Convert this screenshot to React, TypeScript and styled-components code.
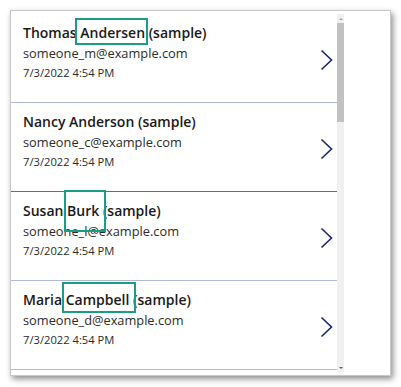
import React from "react";
import styled, { createGlobalStyle } from "styled-components";

const Global = createGlobalStyle`
  html, body { margin: 0; padding: 0; background: #ffffff; }
  body { font-family: "Open Sans", "Noto Sans", sans-serif; }
`;

const Page = styled.div`
  padding: 10px;
  width: 401px;
  height: 387px;
  box-sizing: border-box;
`;

const Frame = styled.div`
  width: 381px;
  height: 366px;
  box-sizing: border-box;
  border: 1px solid #c8c8c8;
  background: #ffffff;
  box-shadow: 2px 3px 6px rgba(0, 0, 0, 0.45);
  padding-top: 3px;
  display: flex;
  align-items: flex-start;
`;

const Gallery = styled.div`
  display: flex;
  width: 333px;
  height: 358px;
`;

const List = styled.div`
  width: 326px;
  height: 358px;
  overflow: hidden;
  display: flex;
  flex-direction: column;
`;

const Row = styled.div<{ $sep: string }>`
  flex: 0 0 89px;
  box-sizing: border-box;
  border-bottom: 1px solid ${(p) => p.$sep};
  display: flex;
  align-items: center;
  padding: 9px 4px 0 12px;
`;

const Info = styled.div`
  flex: 1;
  display: flex;
  flex-direction: column;
  align-self: flex-start;
`;

const Name = styled.div`
  font-size: 14px;
  font-weight: 600;
  color: #1a1a1a;
  line-height: 20px;
  white-space: nowrap;
`;

const Email = styled.div`
  font-size: 12.8px;
  color: #2b2b2b;
  line-height: 20px;
  white-space: nowrap;
`;

const Date = styled.div`
  font-size: 11.2px;
  color: #2b2b2b;
  line-height: 19px;
  white-space: nowrap;
`;

const Mark = styled.span<{ $l: number; $r: number; $t: number; $b: number }>`
  position: relative;
  &::after {
    content: "";
    position: absolute;
    left: ${(p) => p.$l}px;
    right: ${(p) => p.$r}px;
    top: ${(p) => p.$t}px;
    bottom: ${(p) => p.$b}px;
    border: 2px solid #1a9c86;
    pointer-events: none;
  }
`;

const Chevron = styled.svg`
  width: 13px;
  height: 22px;
  flex: 0 0 auto;
  margin-top: -6px;
`;

const Scrollbar = styled.div`
  width: 7px;
  background: #f0f0f0;
  display: flex;
  flex-direction: column;
  align-items: center;
`;

const Arrow = styled.div<{ $down?: boolean }>`
  height: 9px;
  display: flex;
  align-items: center;
  justify-content: center;
  &::before {
    content: "";
    width: 0;
    height: 0;
    border-left: 2px solid transparent;
    border-right: 2px solid transparent;
    ${(p) => (p.$down ? "border-top: 2px solid #606060;" : "border-bottom: 2px solid #a0a0a0;")}
  }
`;

const Thumb = styled.div`
  width: 7px;
  height: 99px;
  background: #c1c1c1;
`;

const Spacer = styled.div`
  flex: 1;
`;

type Item = {
  first: string;
  last: string;
  email: string;
  sep: string;
  mark?: [number, number, number, number];
};

const items: Item[] = [
  { first: "Thomas", last: "Andersen", email: "someone_m@example.com", sep: "#b3b8d9", mark: [-5, -3, -5, -3] },
  { first: "Nancy", last: "Anderson", email: "someone_c@example.com", sep: "#5e67a8" },
  { first: "Susan", last: "Burk", email: "someone_l@example.com", sep: "#b3b8d9", mark: [-3, -7, -11, -12] },
  { first: "Maria", last: "Campbell", email: "someone_d@example.com", sep: "#b3b8d9", mark: [-4, -7, -8, -4] },
];

export default function App() {
  return (
    <Page>
      <Global />
      <Frame>
        <Gallery>
          <List>
            {items.map((it, i) => (
              <Row key={i} $sep={it.sep}>
                <Info>
                  <Name>
                    {it.first}{" "}
                    {it.mark ? (
                      <Mark $l={it.mark[0]} $r={it.mark[1]} $t={it.mark[2]} $b={it.mark[3]}>
                        {it.last}
                      </Mark>
                    ) : (
                      it.last
                    )}{" "}
                    (sample)
                  </Name>
                  <Email>{it.email}</Email>
                  <Date>7/3/2022 4:54 PM</Date>
                </Info>
                <Chevron viewBox="0 0 13 22">
                  <path d="M1.5 1.5 L11.5 11 L1.5 20.5" fill="none" stroke="#1c2470" strokeWidth="1.6" />
                </Chevron>
              </Row>
            ))}
          </List>
          <Scrollbar>
            <Arrow />
            <Thumb />
            <Spacer />
            <Arrow $down />
          </Scrollbar>
        </Gallery>
      </Frame>
    </Page>
  );
}
